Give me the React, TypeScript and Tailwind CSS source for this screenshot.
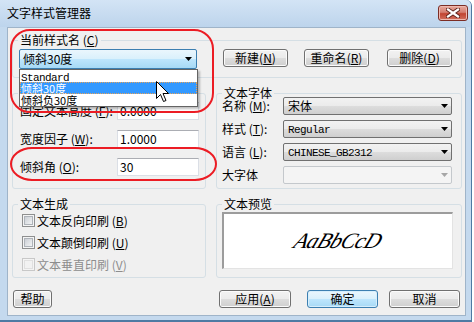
import type { ReactNode } from "react";

const MONO = "font-['Liberation_Mono','Noto_Sans_CJK_SC',monospace] text-[11px] tracking-[-0.6px]";
const BTN =
  "h-[18px] rounded-[3px] border border-[#707070] bg-[linear-gradient(#f2f2f2_0%,#ebebeb_50%,#dddddd_50%,#cfcfcf_100%)] shadow-[inset_0_0_0_1px_#fbfbfb] flex items-center justify-center leading-none";
const BTN_DEFAULT =
  "h-[18px] rounded-[3px] border border-[#3c7fb1] bg-[linear-gradient(#eaf6fd_0%,#d9f0fc_50%,#bee6fd_50%,#a7d9f5_100%)] shadow-[inset_0_0_0_1px_#d6eefc] flex items-center justify-center leading-none";

function K({ k }: { k: string }) {
  return (
    <span className="whitespace-nowrap">
      {" "}(<span className="underline underline-offset-[1px]">{k}</span>)
    </span>
  );
}

function Arrow({ color = "#000" }: { color?: string }) {
  return (
    <svg width="7" height="4" viewBox="0 0 7 4" className="shrink-0">
      <path d="M0 0h7L3.5 4z" fill={color} />
    </svg>
  );
}

function Group({ title, className, children }: { title?: ReactNode; className: string; children: ReactNode }) {
  return (
    <fieldset className={`border border-[#d5dfe5] rounded-[3px] min-w-0 ${className}`}>
      <legend className="ml-[5px] px-[2px] h-[14px] leading-[14px]">{title ?? <span className="inline-block w-[48px]" />}</legend>
      {children}
    </fieldset>
  );
}

function Combo({ children, disabled }: { children?: ReactNode; disabled?: boolean }) {
  return (
    <div
      className={`h-[18px] w-[169px] rounded-[2px] border flex items-center pl-[4px] pr-[3px] ${
        disabled
          ? "border-[#c4c8cc] bg-[#f4f4f4]"
          : "border-[#707070] bg-[linear-gradient(#f2f2f2_0%,#ebebeb_50%,#dddddd_50%,#cfcfcf_100%)]"
      }`}
    >
      <span className="flex-1 leading-none">{children}</span>
      <Arrow color={disabled ? "#a6a6a6" : "#000"} />
    </div>
  );
}

function Field({ label, value }: { label: ReactNode; value: string }) {
  return (
    <div className="flex items-center h-[18px]">
      <span className="w-[97px] whitespace-nowrap">{label}</span>
      <div className="w-[82px] h-[18px] border border-[#dbdfe6] border-t-[#abadb3] bg-white flex items-center pl-[2px] leading-none">
        {value}
      </div>
    </div>
  );
}

function Check({ label, disabled }: { label: ReactNode; disabled?: boolean }) {
  return (
    <div className="flex items-center gap-[2px] h-[13px]">
      <span
        className={`w-[13px] h-[13px] border flex items-center justify-center ${
          disabled ? "border-[#c8c8c8] bg-[#f4f4f4]" : "border-[#8e8f8f] bg-[#f4f4f4]"
        }`}
      >
        <span
          className={`w-[9px] h-[9px] border ${
            disabled
              ? "border-[#e0e0e0] bg-[#f2f2f2]"
              : "border-[#aeb3b9] bg-[linear-gradient(135deg,#cbcfd5,#f2f3f4)]"
          }`}
        />
      </span>
      <span className={`whitespace-nowrap ${disabled ? "text-[#8d8d8d]" : ""}`}>{label}</span>
    </div>
  );
}

export default function App() {
  return (
    <div className="w-[474px] h-[322px] bg-white overflow-hidden font-['Noto_Sans_CJK_SC',sans-serif] text-[12px] leading-[14px] text-black">
      <div className="relative w-[472px] h-[322px] bg-[#c4d9ee] border-r border-b-2 border-[#4f7aa3] rounded-tr-[6px] flex flex-col">
        {/* title bar */}
        <div className="h-[27px] flex items-start justify-between pl-[7px] pr-[3px] bg-[linear-gradient(#d3e4f5,#bdd4ec)] rounded-tr-[6px]">
          <span className="mt-[6px]">文字样式管理器</span>
          <div className="mt-[5px] w-[30px] h-[16px] rounded-[3px] border border-[#7c2d25] bg-[linear-gradient(#e9a99e_0%,#d47f71_45%,#c14431_55%,#d2715f_100%)] shadow-[inset_0_0_0_1px_#eeb9b0] flex items-center justify-center">
            <svg width="14" height="10" viewBox="0 0 14 10">
              <path d="M2 1.5L12 8.5M12 1.5L2 8.5" stroke="#5a2019" strokeWidth="4" strokeLinecap="square" />
              <path d="M2 1.5L12 8.5M12 1.5L2 8.5" stroke="#fff" strokeWidth="2.2" strokeLinecap="square" />
            </svg>
          </div>
        </div>

        {/* client area */}
        <div className="ml-[7px] mr-[5px] h-[289px] bg-[#f0f0f0] border border-[#9fb4c9] pl-[4px] flex flex-col">
          <Group title={<>当前样式名<K k="C" /></>} className="mt-[5px] w-[450px]">
            <div className="flex items-start pl-[6px] pt-[2px] pb-[8px]">
              <div className="w-[178px] h-[20px] rounded-[2px] border border-[#3c7fb1] bg-[linear-gradient(#eaf6fd_0%,#d9f0fc_50%,#bee6fd_50%,#a7d9f5_100%)] flex items-center pl-[3px] pr-[4px]">
                <span className="flex-1 leading-none">倾斜30度</span>
                <Arrow />
              </div>
              <div className={`${BTN} w-[65px] ml-[26px]`}>
                新建<K k="N" />
              </div>
              <div className={`${BTN} w-[65px] ml-[16px]`}>
                重命名<K k="R" />
              </div>
              <div className={`${BTN} w-[65px] ml-[18px]`}>
                删除<K k="D" />
              </div>
            </div>
          </Group>

          <div className="flex mt-[8px] gap-[10px]">
            <Group className="w-[194px] h-[103px]">
              <div className="flex flex-col gap-[10px] pl-[7px] pt-[2px]">
                <Field label={<>固定文本高度<K k="F" />:</>} value="0.0000" />
                <Field label={<>宽度因子<K k="W" />:</>} value="1.0000" />
                <Field label={<>倾斜角<K k="O" />:</>} value="30" />
              </div>
            </Group>
            <Group title="文本字体" className="w-[246px] h-[103px]">
              <div className="flex flex-col gap-[5px] pl-[5px] -mt-[3px]">
                <div className="flex items-center">
                  <span className="w-[61px]">名称<K k="M" />:</span>
                  <Combo>宋体</Combo>
                </div>
                <div className="flex items-center">
                  <span className="w-[61px]">样式<K k="T" />:</span>
                  <Combo>
                    <span className={MONO}>Regular</span>
                  </Combo>
                </div>
                <div className="flex items-center">
                  <span className="w-[61px]">语言<K k="L" />:</span>
                  <Combo>
                    <span className={MONO}>CHINESE_GB2312</span>
                  </Combo>
                </div>
                <div className="flex items-center">
                  <span className="w-[61px]">大字体</span>
                  <Combo disabled />
                </div>
              </div>
            </Group>
          </div>

          <div className="flex mt-[8px] gap-[10px]">
            <Group title="文本生成" className="w-[194px] h-[81px]">
              <div className="flex flex-col gap-[9px] pl-[9px] pt-[3px]">
                <Check label={<>文本反向印刷<K k="B" /></>} />
                <Check label={<>文本颠倒印刷<K k="U" /></>} />
                <Check label={<>文本垂直印刷<K k="V" /></>} disabled />
              </div>
            </Group>
            <Group title="文本预览" className="w-[246px] h-[81px]">
              <div className="pl-[5px] pt-[1px]">
                <div className="w-[231px] h-[57px] bg-white border-t-2 border-l-2 border-[#9c9c9c] border-r border-b border-r-[#e3e3e3] border-b-[#e3e3e3] flex items-center justify-center">
                  <span className="font-['Liberation_Serif',serif] italic font-light text-[22px] leading-none tracking-[-0.5px] [transform:skewX(-22deg)]">
                    AaBbCcD
                  </span>
                </div>
              </div>
            </Group>
          </div>

          <div className="flex mt-[12px] pl-[1px]">
            <div className={`${BTN} w-[39px]`}>帮助</div>
            <div className={`${BTN} w-[72px] ml-[167px]`}>
              应用<K k="A" />
            </div>
            <div className={`${BTN_DEFAULT} w-[71px] ml-[16px]`}>确定</div>
            <div className={`${BTN} w-[71px] ml-[11px]`}>取消</div>
          </div>
        </div>

        {/* open dropdown list */}
        <div className="absolute left-[19px] top-[69px] w-[179px] h-[38px] bg-white border border-[#646464] shadow-[2px_2px_2px_rgba(0,0,0,0.25)] flex flex-col text-[11px]">
          <div className="h-[12px] leading-[12px] pl-[1px]">
            <span className={MONO}>Standard</span>
          </div>
          <div className="h-[12px] leading-[12px] pl-[1px] bg-[#3399ff] text-white outline-1 outline-dotted outline-[#e7a35a] -outline-offset-1">
            倾斜30度
          </div>
          <div className="h-[12px] leading-[12px] pl-[1px]">倾斜负30度</div>
        </div>

        {/* mouse cursor */}
        <svg className="absolute left-[156px] top-[81px]" width="14" height="22" viewBox="0 0 14 22">
          <path
            d="M0.5 0.5V17.5L4.5 13.5L7.5 20.5L10 19.5L7 12.5H12.5Z"
            fill="#fff"
            stroke="#000"
            strokeWidth="1"
            strokeLinejoin="round"
          />
        </svg>

        {/* red annotation marks */}
        <div className="absolute left-[10px] top-[29px] w-[204px] h-[84px] border-2 border-[#ec1c24] rounded-[20px]" />
        <div className="absolute left-[10px] top-[147px] w-[207px] h-[34px] border-2 border-[#ec1c24] rounded-[22px/17px]" />
      </div>
    </div>
  );
}
